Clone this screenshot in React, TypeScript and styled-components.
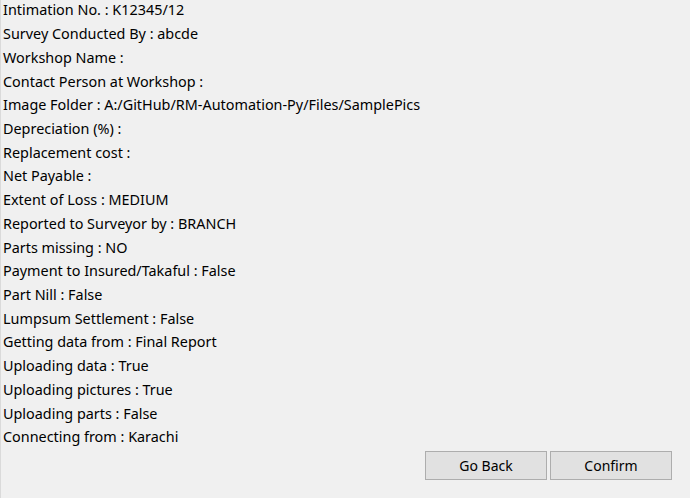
import styled, { createGlobalStyle } from 'styled-components';

const GlobalStyle = createGlobalStyle`
  html, body {
    margin: 0;
    padding: 0;
    background: #f0f0f0;
  }
`;

const Window = styled.div`
  width: 690px;
  height: 498px;
  box-sizing: border-box;
  background: #f0f0f0;
  border-left: 1px solid #dadada;
  font-family: 'Noto Sans', 'Open Sans', sans-serif;
  font-size: 14.4px;
  color: #000;
  display: flex;
  flex-direction: column;
  overflow: hidden;
`;

const Details = styled.div`
  display: grid;
  grid-auto-rows: 23.72px;
  padding: 0 0 0 2px;
  margin-top: -2px;
`;

const Line = styled.div`
  display: flex;
  align-items: center;
  white-space: nowrap;
`;

const Actions = styled.div`
  display: flex;
  justify-content: flex-end;
  gap: 3px;
  padding: 2px 18px 0 0;
`;

const Button = styled.button`
  width: 122px;
  height: 29px;
  box-sizing: border-box;
  background: #e1e1e1;
  border: 1px solid #adadad;
  border-radius: 0;
  font-family: inherit;
  font-size: 14px;
  color: #000;
  padding: 0;
`;

const rows: [string, string][] = [
  ['Intimation No.', 'K12345/12'],
  ['Survey Conducted By', 'abcde'],
  ['Workshop Name', ''],
  ['Contact Person at Workshop', ''],
  ['Image Folder', 'A:/GitHub/RM-Automation-Py/Files/SamplePics'],
  ['Depreciation (%)', ''],
  ['Replacement cost', ''],
  ['Net Payable', ''],
  ['Extent of Loss', 'MEDIUM'],
  ['Reported to Surveyor by', 'BRANCH'],
  ['Parts missing', 'NO'],
  ['Payment to Insured/Takaful', 'False'],
  ['Part Nill', 'False'],
  ['Lumpsum Settlement', 'False'],
  ['Getting data from', 'Final Report'],
  ['Uploading data', 'True'],
  ['Uploading pictures', 'True'],
  ['Uploading parts', 'False'],
  ['Connecting from', 'Karachi'],
];

export default function App() {
  return (
    <>
      <GlobalStyle />
      <Window>
        <Details>
          {rows.map(([label, value]) => (
            <Line key={label}>
              {label} : {value}
            </Line>
          ))}
        </Details>
        <Actions>
          <Button>Go Back</Button>
          <Button>Confirm</Button>
        </Actions>
      </Window>
    </>
  );
}
